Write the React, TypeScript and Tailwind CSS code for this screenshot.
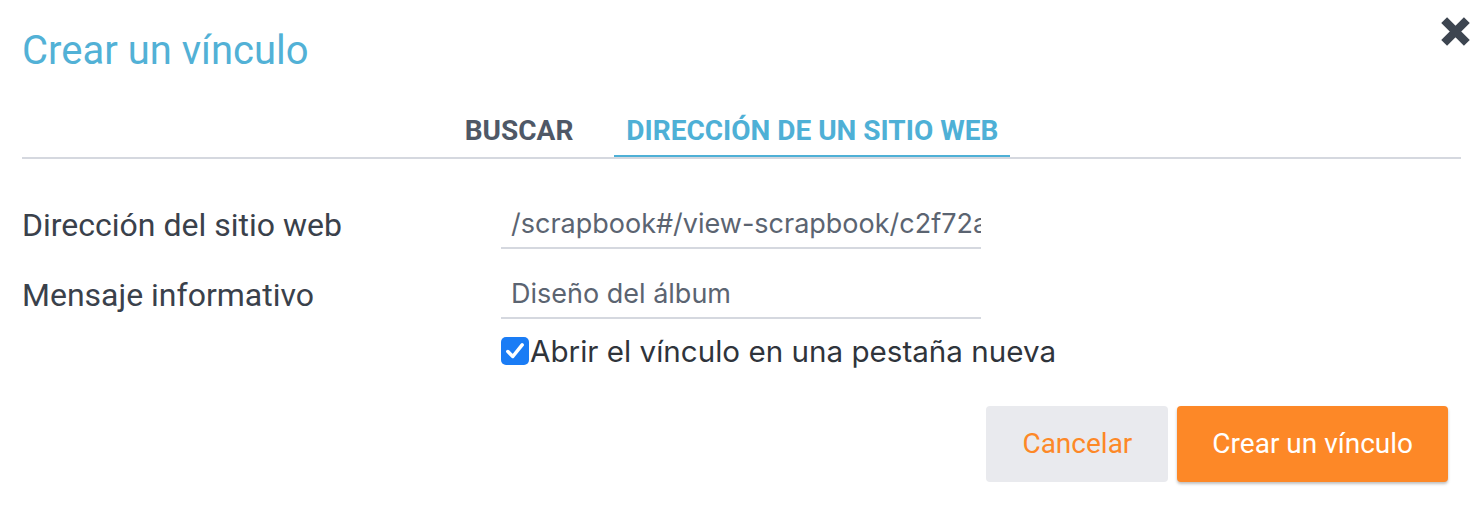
import { useState } from "react";

const roboto = { fontFamily: "Roboto, 'Liberation Sans', sans-serif" };
const inter = { fontFamily: "Inter, 'Liberation Sans', sans-serif" };

function CloseIcon() {
  return (
    <svg width="33" height="33" viewBox="0 0 32 32" aria-hidden="true">
      <path d="M5 5 L27 27 M27 5 L5 27" stroke="#3d4550" strokeWidth="8" strokeLinecap="butt" />
    </svg>
  );
}

function FieldRow({ label, value }: { label: string; value: string }) {
  return (
    <div className="grid grid-cols-[479px_480px] items-center">
      <label className="text-[32px] leading-[36px] text-[#3a414b]" style={roboto}>
        {label}
      </label>
      <input
        readOnly
        value={value}
        className="h-[49px] w-[480px] border-b-2 border-[#d5d8df] pl-[10px] pr-0 text-[27px] text-[#5b6471] outline-none"
        style={inter}
      />
    </div>
  );
}

export default function App() {
  const [newTab, setNewTab] = useState(true);

  return (
    <div className="w-[1482px] h-[526px] bg-white pl-[22px] pr-[21px]">
      <div className="flex items-start justify-between">
        <h1 className="pt-[31px] text-[40px] leading-[40px] text-[#52b1d6]" style={roboto}>
          Crear un vínculo
        </h1>
        <button type="button" className="mt-[15px] -mr-[11px]">
          <CloseIcon />
        </button>
      </div>

      <div className="mt-[46px] flex justify-center gap-[29px] border-b-2 border-[#d5d8df] pr-[20px]" style={roboto}>
        <button type="button" className="px-[12px] pb-[10px] border-b-2 border-transparent text-[28px] leading-[28px] font-bold text-[#4f5866]">
          BUSCAR
        </button>
        <button type="button" className="px-[12px] pb-[10px] border-b-2 border-[#4eb0d6] text-[28px] leading-[28px] font-bold text-[#4eb0d6]">
          DIRECCIÓN DE UN SITIO WEB
        </button>
      </div>

      <div className="mt-[41px] flex flex-col gap-[21px]">
        <FieldRow label="Dirección del sitio web" value="/scrapbook#/view-scrapbook/c2f72a8e" />
        <FieldRow label="Mensaje informativo" value="Diseño del álbum" />
      </div>

      <label className="mt-[15px] ml-[479px] flex items-center gap-[1px] cursor-pointer" style={inter}>
        <span
          onClick={() => setNewTab(!newTab)}
          className={`flex h-[28px] w-[28px] items-center justify-center rounded-[5px] ${newTab ? "bg-[#1a7cf5]" : "border border-gray-400 bg-white"}`}
        >
          {newTab && (
            <svg width="22" height="22" viewBox="0 0 20 20" aria-hidden="true">
              <path d="M3.5 10.5 L8 15 L16.5 4.5" fill="none" stroke="white" strokeWidth="3.2" strokeLinecap="round" strokeLinejoin="round" />
            </svg>
          )}
        </span>
        <span className="text-[29.6px] leading-[34px] text-[#2f343b]">Abrir el vínculo en una pestaña nueva</span>
      </label>

      <div className="mt-[38px] flex justify-end gap-[9px] pr-[13px]" style={roboto}>
        <button type="button" className="h-[76px] rounded-[4px] bg-[#e9eaee] px-[36px] text-[28px] text-[#fd8827]">
          Cancelar
        </button>
        <button type="button" className="h-[76px] rounded-[4px] bg-[#fd8827] px-[35px] text-[28px] text-white shadow-[0_2px_3px_rgba(0,0,0,0.25)]">
          Crear un vínculo
        </button>
      </div>
    </div>
  );
}
